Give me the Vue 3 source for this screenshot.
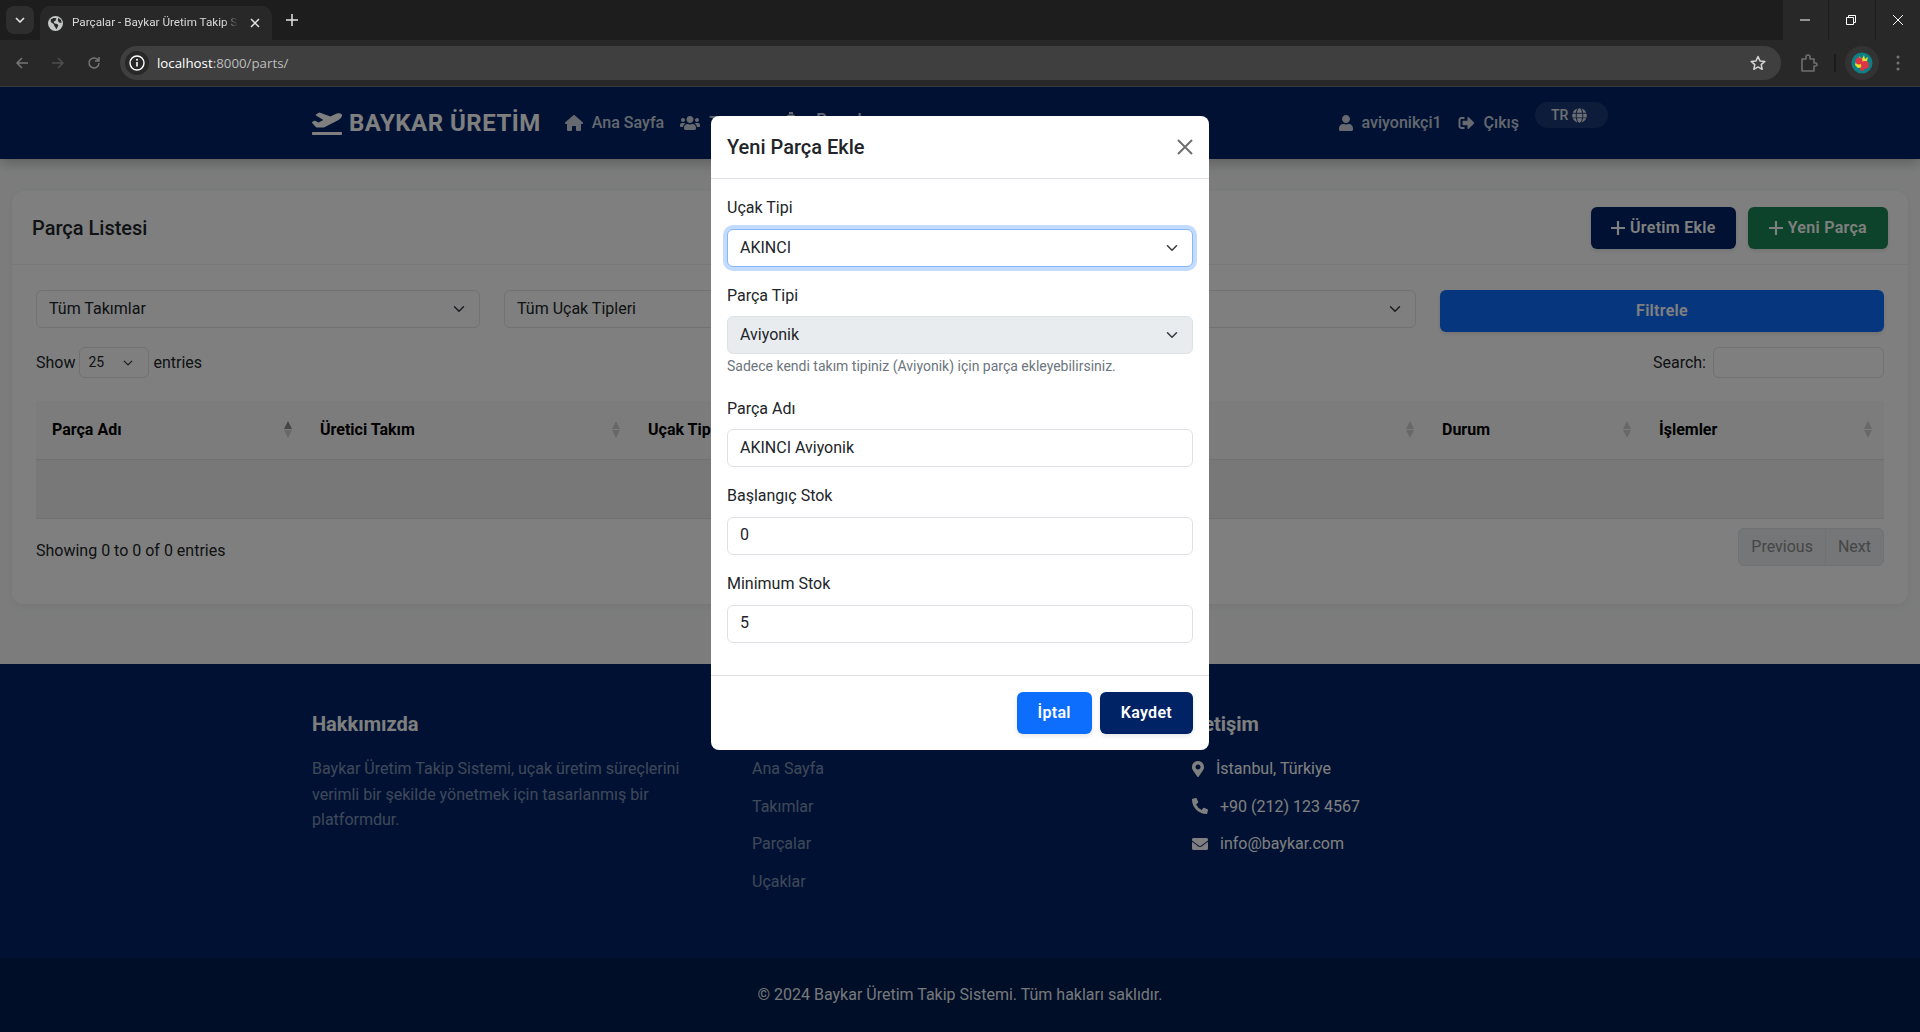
<script setup>
const icons = {
  plane: { box: '0 0 640 512', d: 'M624 448H16c-8.84 0-16 7.16-16 16v32c0 8.84 7.16 16 16 16h608c8.84 0 16-7.16 16-16v-32c0-8.84-7.16-16-16-16zM80.55 341.27c6.28 6.84 15.1 10.72 24.33 10.71l130.54-.18a65.62 65.62 0 0 0 29.64-7.12l290.96-147.65c26.74-13.57 50.71-32.94 67.02-58.31 18.31-28.48 20.3-49.09 13.07-63.65-7.21-14.57-24.74-25.27-58.25-27.45-29.85-1.94-59.54 5.92-86.28 19.48l-98.51 49.99-218.7-82.06a17.799 17.799 0 0 0-18-1.11L90.62 67.29c-10.67 5.41-13.25 19.65-5.17 28.53l156.22 98.1-103.21 52.38-72.35-36.47a17.804 17.804 0 0 0-16.07.02L9.91 230.22c-10.44 5.3-13.19 19.12-5.57 28.08l76.21 82.97z' },
  home: { box: '0 0 576 512', d: 'M575.8 255.5c0 18-15 32.1-32 32.1h-32l.7 160.2c0 2.7-.2 5.4-.5 8.1V472c0 22.1-17.9 40-40 40H456c-1.1 0-2.2 0-3.3-.1c-1.4 .1-2.8 .1-4.2 .1H416 392c-22.1 0-40-17.9-40-40V448 384c0-17.7-14.3-32-32-32H256c-17.7 0-32 14.3-32 32v64 24c0 22.1-17.9 40-40 40H160 128.1c-1.5 0-3-.1-4.5-.2c-1.2 .1-2.4 .2-3.6 .2H104c-22.1 0-40-17.9-40-40V360c0-.9 0-1.9 .1-2.8V287.6H32c-18 0-32-14-32-32.1c0-9 3-17 10-24L266.4 8c7-7 15-8 22-8s15 2 21 7L564.8 231.5c8 7 12 15 11 24z' },
  users: { box: '0 0 640 512', d: 'M96 224c35.3 0 64-28.7 64-64s-28.7-64-64-64-64 28.7-64 64 28.7 64 64 64zm448 0c35.3 0 64-28.7 64-64s-28.7-64-64-64-64 28.7-64 64 28.7 64 64 64zm32 32h-64c-17.6 0-33.5 7.1-45.1 18.6 40.3 22.1 68.9 62 75.1 109.4h66c17.7 0 32-14.3 32-32v-32c0-35.3-28.7-64-64-64zm-256 0c61.9 0 112-50.1 112-112S381.9 32 320 32 208 82.1 208 144s50.1 112 112 112zm76.8 32h-8.3c-20.8 10-43.9 16-68.5 16s-47.6-6-68.5-16h-8.3C179.6 288 128 339.6 128 403.2V432c0 26.5 21.5 48 48 48h288c26.5 0 48-21.5 48-48v-28.8c0-63.6-51.6-115.2-115.2-115.2zm-223.7-13.4C161.5 263.1 145.6 256 128 256H64c-35.3 0-64 28.7-64 64v32c0 17.7 14.3 32 32 32h65.9c6.3-47.4 34.9-87.3 75.2-109.4z' },
  user: { box: '0 0 448 512', d: 'M224 256c70.7 0 128-57.3 128-128S294.7 0 224 0 96 57.3 96 128s57.3 128 128 128zm89.6 32h-16.7c-22.2 10.2-46.9 16-72.9 16s-50.6-5.8-72.9-16h-16.7C60.2 288 0 348.2 0 422.4V464c0 26.5 21.5 48 48 48h352c26.5 0 48-21.5 48-48v-41.6c0-74.2-60.2-134.4-134.4-134.4z' },
  logout: { box: '0 0 512 512', d: 'M497 273L329 441c-15 15-41 4.5-41-17v-96H152c-13.3 0-24-10.7-24-24v-96c0-13.3 10.7-24 24-24h136V88c0-21.4 25.9-32 41-17l168 168c9.3 9.4 9.3 24.6 0 34zM192 436v-40c0-6.6-5.4-12-12-12H96c-17.7 0-32-14.3-32-32V160c0-17.7 14.3-32 32-32h84c6.6 0 12-5.4 12-12V76c0-6.6-5.4-12-12-12H96c-53 0-96 43-96 96v192c0 53 43 96 96 96h84c6.6 0 12-5.4 12-12z' },
  globe: { box: '0 0 496 512', d: 'M336.5 160C322 70.7 287.8 8 248 8s-74 62.7-88.5 152h177zM152 256c0 22.2 1.2 43.5 3.3 64h185.3c2.1-20.5 3.3-41.8 3.3-64s-1.2-43.5-3.3-64H155.3c-2.1 20.5-3.3 41.8-3.3 64zm324.7-96c-28.6-67.9-86.5-120.4-158-141.6 24.4 33.8 41.2 84.7 50 141.6h108zM177.2 18.4C105.8 39.6 47.8 92.1 19.3 160h108c8.7-56.9 25.5-107.8 49.9-141.6zM487.4 192H372.7c2.1 21 3.3 42.5 3.3 64s-1.2 43-3.3 64h114.6c5.5-20.5 8.6-41.8 8.6-64s-3.1-43.5-8.5-64zM120 256c0-21.5 1.2-43 3.3-64H8.6C3.2 212.5 0 233.8 0 256s3.2 43.5 8.6 64h114.6c-2-21-3.2-42.5-3.2-64zm39.5 96c14.5 89.3 48.7 152 88.5 152s74-62.7 88.5-152h-177zm159.3 141.6c71.4-21.2 129.4-73.7 158-141.6h-108c-8.8 56.9-25.6 107.8-50 141.6zM19.3 352c28.6 67.9 86.5 120.4 158 141.6-24.4-33.8-41.2-84.7-50-141.6h-108z' },
  pin: { box: '0 0 384 512', d: 'M172.268 501.67C26.97 291.031 0 273.413 0 192 0 85.961 85.961 0 192 0s192 85.961 192 192c0 81.413-26.97 99.031-172.268 309.67-9.535 13.774-29.93 13.773-39.464 0zM192 272c44.183 0 80-35.817 80-80s-35.817-80-80-80-80 35.817-80 80 35.817 80 80 80z' },
  phone: { box: '0 0 512 512', d: 'M497.39 361.8l-112-48a24 24 0 0 0-28 6.9l-49.6 60.6A370.66 370.66 0 0 1 130.6 204.11l60.6-49.6a23.94 23.94 0 0 0 6.9-28l-48-112A24.16 24.16 0 0 0 122.6.61l-104 24A24 24 0 0 0 0 48c0 256.5 207.9 464 464 464a24 24 0 0 0 23.4-18.6l24-104a24.29 24.29 0 0 0-14.01-27.6z' },
  mail: { box: '0 0 512 512', d: 'M502.3 190.8c3.9-3.1 9.7-.2 9.7 4.7V400c0 26.5-21.5 48-48 48H48c-26.5 0-48-21.5-48-48V195.6c0-5 5.7-7.8 9.7-4.7 22.4 17.4 52.1 39.5 154.1 113.6 21.1 15.4 56.7 47.8 92.2 47.6 35.7.3 72-32.8 92.3-47.6 102-74.1 131.6-96.3 154-113.7zM256 320c23.2.4 56.6-29.2 73.4-41.4 132.7-96.3 142.8-104.7 173.4-128.7 5.8-4.5 9.2-11.5 9.2-18.9v-19c0-26.5-21.5-48-48-48H48C21.5 64 0 85.5 0 112v19c0 7.4 3.4 14.3 9.2 18.9 30.6 23.9 40.7 32.4 173.4 128.7 16.8 12.2 50.2 41.8 73.4 41.4z' },
  cog: { box: '0 0 30 24', d: 'M3 0h6v4H3zM6 3a9 9 0 1 0 0 18 9 9 0 0 0 0-18z' }
}

const navLinks = [
  { icon: 'home', label: 'Ana Sayfa', cls: 'i-home' },
  { icon: 'users', label: 'Takımlar' },
  { icon: 'cog', label: 'Parçalar', cls: 'raised' },
  { icon: 'plane', label: 'Uçaklar' }
]

const filters = ['Tüm Takımlar', 'Tüm Uçak Tipleri', 'Tüm Parça Tipleri']

const columns = [
  { label: 'Parça Adı', width: 268, active: true },
  { label: 'Üretici Takım', width: 328 },
  { label: 'Uçak Tipi', width: 368 },
  { label: 'Stok', width: 426 },
  { label: 'Durum', width: 217 },
  { label: 'İşlemler', width: 241 }
]

const quickLinks = ['Ana Sayfa', 'Takımlar', 'Parçalar', 'Uçaklar']

const contacts = [
  { icon: 'pin', text: 'İstanbul, Türkiye', cls: 'c-pin' },
  { icon: 'phone', text: '+90 (212) 123 4567', cls: 'c-wide' },
  { icon: 'mail', text: 'info@baykar.com', cls: 'c-wide' }
]

const fields = [
  { label: 'Parça Adı', value: 'AKINCI Aviyonik' },
  { label: 'Başlangıç Stok', value: '0' },
  { label: 'Minimum Stok', value: '5' }
]
</script>

<template>
  <div class="screen">
    <!-- browser chrome -->
    <div class="tabstrip">
      <div class="tab-menu">
        <svg width="10" height="6" viewBox="0 0 10 6"><path d="M1 1l4 4 4-4" fill="none" stroke="#e3e3e3" stroke-width="1.6" /></svg>
      </div>
      <div class="tab">
        <svg class="tab-globe" width="15" height="15" viewBox="0 0 16 16">
          <circle cx="8" cy="8" r="8" fill="#c4c7c5" />
          <path d="M3 3.500l3-1.500 3 .5-1 2.500-2 1 1 2 3 .5 1 2-2 3.500-2-3-1-2.500-3-2zM11 1.800l3 2.700.5 3-2.500-.5-1.500-2z" fill="#282828" />
        </svg>
        <span class="tab-title">Parçalar - Baykar Üretim Takip S</span>
        <svg width="10" height="10" viewBox="0 0 10 10"><path d="M1 1l8 8M9 1l-8 8" stroke="#e3e3e3" stroke-width="1.5" /></svg>
      </div>
      <svg class="new-tab" width="12" height="12" viewBox="0 0 12 12"><path d="M6 0v12M0 6h12" stroke="#e3e3e3" stroke-width="1.5" /></svg>
      <div class="win-controls">
        <div class="win-btn">
          <svg width="10" height="10" viewBox="0 0 10 10"><path d="M0 5h10" stroke="#fff" /></svg>
        </div>
        <div class="win-btn">
          <svg width="10" height="10" viewBox="0 0 10 10"><path d="M.5 2.500h7v7h-7zM2.500 2.500v-2h7v7h-2" fill="none" stroke="#fff" /></svg>
        </div>
        <div class="win-btn">
          <svg width="10" height="10" viewBox="0 0 10 10"><path d="M0 0l10 10M10 0L0 10" stroke="#fff" /></svg>
        </div>
      </div>
    </div>
    <div class="toolbar">
      <svg class="tool-back" width="14" height="14" viewBox="0 0 14 14"><path d="M13 7H2M7 2L2 7l5 5" fill="none" stroke="#757575" stroke-width="1.500" /></svg>
      <svg class="tool-fwd" width="14" height="14" viewBox="0 0 14 14"><path d="M1 7h11M7 2l5 5-5 5" fill="none" stroke="#4d4d4d" stroke-width="1.500" /></svg>
      <svg class="tool-reload" width="14" height="14" viewBox="0 0 14 14"><path d="M12 7a5 5 0 1 1-1.500-3.600L12 5M12 1v4H8" fill="none" stroke="#757575" stroke-width="1.500" /></svg>
      <div class="omnibox">
        <div class="site-info">
          <svg width="16" height="16" viewBox="0 0 16 16"><circle cx="8" cy="8" r="7" fill="none" stroke="#fff" stroke-width="1.400" /><path d="M8 7v4.500" stroke="#fff" stroke-width="1.600" /><circle cx="8" cy="4.800" r="1" fill="#fff" /></svg>
        </div>
        <span class="url"><b>localhost</b>:8000/parts/</span>
        <svg class="star" width="16" height="16" viewBox="0 0 16 16"><path d="M8 1.500l2 4.400 4.800.5-3.600 3.200 1 4.700L8 11.900l-4.200 2.400 1-4.700L1.200 6.400 6 5.900z" fill="none" stroke="#d5d5d5" stroke-width="1.500" stroke-linejoin="round" /></svg>
      </div>
      <svg class="puzzle" width="17" height="18" viewBox="0 0 17 18"><path d="M1 5h4V3a2 2 0 0 1 4 0v2h4v4h1.500a1.500 1.500 0 0 1 0 3H13v5H1z" fill="none" stroke="#6f6f6f" stroke-width="1.600" stroke-linejoin="round" /></svg>
      <span class="tool-sep"></span>
      <div class="avatar-wrap">
        <svg width="22" height="22" viewBox="0 0 22 22">
          <circle cx="11" cy="11" r="10.500" fill="#0f7f86" />
          <path d="M6 6l3 2-1-4 3 3 2-4 1 4 3-2-1 4-3 6-6 1-3-3z" fill="#e7e02c" />
          <circle cx="8" cy="9" r="3.500" fill="#dc3545" />
          <circle cx="14" cy="13" r="4" fill="#dc3545" />
          <circle cx="11" cy="17" r="2" fill="#dc3545" />
        </svg>
      </div>
      <svg class="kebab" width="4" height="16" viewBox="0 0 4 16"><circle cx="2" cy="2" r="1.500" fill="#757575" /><circle cx="2" cy="8" r="1.500" fill="#757575" /><circle cx="2" cy="14" r="1.500" fill="#757575" /></svg>
    </div>

    <div class="page">
      <header class="topbar">
        <div class="container topbar-in">
          <a class="brand">
            <svg class="brand-icon" :viewBox="icons.plane.box"><path :d="icons.plane.d" /></svg>
            BAYKAR ÜRETİM
          </a>
          <nav class="nav">
            <a v-for="link in navLinks" :key="link.label" class="nav-link" :class="link.cls">
              <svg class="nav-icon" :viewBox="icons[link.icon].box"><path :d="icons[link.icon].d" /></svg>
              {{ link.label }}
            </a>
          </nav>
          <div class="nav-right">
            <a class="nav-link thin">
              <svg class="user-icon" :viewBox="icons.user.box"><path :d="icons.user.d" /></svg>
              aviyonikçi1
            </a>
            <a class="nav-link thin">
              <svg class="user-icon wide" :viewBox="icons.logout.box"><path :d="icons.logout.d" /></svg>
              Çıkış
            </a>
            <div class="lang">
              TR
              <svg :viewBox="icons.globe.box"><path :d="icons.globe.d" /></svg>
            </div>
          </div>
        </div>
      </header>

      <main class="main">
        <section class="card">
          <div class="card-head">
            <h5>Parça Listesi</h5>
            <div class="head-btns">
              <button class="btn navy add-prod"><svg class="plus" width="14" height="14" viewBox="0 0 14 14"><path d="M7 0v14M0 7h14" stroke="currentColor" stroke-width="2.200" /></svg>Üretim Ekle</button>
              <button class="btn green"><svg class="plus" width="14" height="14" viewBox="0 0 14 14"><path d="M7 0v14M0 7h14" stroke="currentColor" stroke-width="2.200" /></svg>Yeni Parça</button>
            </div>
          </div>
          <div class="card-body">
            <div class="filters">
              <div v-for="f in filters" :key="f" class="select">
                <span>{{ f }}</span>
                <svg width="16" height="12" viewBox="0 0 16 16"><path d="M2 5l6 6 6-6" fill="none" stroke="#343a40" stroke-width="2" stroke-linecap="round" stroke-linejoin="round" /></svg>
              </div>
              <button class="btn blue">Filtrele</button>
            </div>

            <div class="dt-top">
              <div class="dt-length">
                Show
                <div class="select mini">
                  <span>25</span>
                  <svg width="14" height="10" viewBox="0 0 16 16"><path d="M2 5l6 6 6-6" fill="none" stroke="#343a40" stroke-width="2" stroke-linecap="round" stroke-linejoin="round" /></svg>
                </div>
                entries
              </div>
              <div class="dt-search">
                Search:
                <input class="search-input" type="text" />
              </div>
            </div>

            <table class="table">
              <colgroup>
                <col v-for="c in columns" :key="c.label" :style="{ width: c.width + 'px' }" />
              </colgroup>
              <thead>
                <tr>
                  <th v-for="c in columns" :key="c.label">
                    <div class="th-in">
                      {{ c.label }}
                      <span class="sort" :class="{ active: c.active }"><i class="up"></i><i class="down"></i></span>
                    </div>
                  </th>
                </tr>
              </thead>
              <tbody>
                <tr>
                  <td colspan="6">No data available in table</td>
                </tr>
              </tbody>
            </table>

            <div class="dt-bottom">
              <div class="dt-info">Showing 0 to 0 of 0 entries</div>
              <div class="pager">
                <span>Previous</span>
                <span>Next</span>
              </div>
            </div>
          </div>
        </section>
      </main>

      <footer class="footer">
        <div class="container footer-cols">
          <div>
            <h5>Hakkımızda</h5>
            <p class="muted">Baykar Üretim Takip Sistemi, uçak üretim süreçlerini verimli bir şekilde yönetmek için tasarlanmış bir platformdur.</p>
          </div>
          <div>
            <h5>Hızlı Erişim</h5>
            <a v-for="l in quickLinks" :key="l" class="muted foot-link">{{ l }}</a>
          </div>
          <div>
            <h5>İletişim</h5>
            <div v-for="c in contacts" :key="c.text" class="contact" :class="c.cls">
              <svg :viewBox="icons[c.icon].box"><path :d="icons[c.icon].d" /></svg>
              {{ c.text }}
            </div>
          </div>
        </div>
        <div class="copyright">© 2024 Baykar Üretim Takip Sistemi. Tüm hakları saklıdır.</div>
      </footer>

      <!-- modal open, over the page -->
      <div class="backdrop">
        <div class="modal">
          <div class="modal-head">
            <h5>Yeni Parça Ekle</h5>
            <svg width="16" height="16" viewBox="0 0 16 16"><path d="M1 1l14 14M15 1L1 15" stroke="#6d6f71" stroke-width="2" /></svg>
          </div>
          <div class="modal-body">
            <div class="group">
              <label>Uçak Tipi</label>
              <div class="select focus">
                <span>AKINCI</span>
                <svg width="16" height="12" viewBox="0 0 16 16"><path d="M2 5l6 6 6-6" fill="none" stroke="#343a40" stroke-width="2" stroke-linecap="round" stroke-linejoin="round" /></svg>
              </div>
            </div>
            <div class="group">
              <label>Parça Tipi</label>
              <div class="select disabled">
                <span>Aviyonik</span>
                <svg width="16" height="12" viewBox="0 0 16 16"><path d="M2 5l6 6 6-6" fill="none" stroke="#343a40" stroke-width="2" stroke-linecap="round" stroke-linejoin="round" /></svg>
              </div>
              <small>Sadece kendi takım tipiniz (Aviyonik) için parça ekleyebilirsiniz.</small>
            </div>
            <div v-for="f in fields" :key="f.label" class="group">
              <label>{{ f.label }}</label>
              <input class="input" type="text" :value="f.value" />
            </div>
          </div>
          <div class="modal-foot">
            <button class="btn blue modal-btn">İptal</button>
            <button class="btn navy modal-btn">Kaydet</button>
          </div>
        </div>
      </div>
    </div>
  </div>
</template>

<style>
html,
body {
  margin: 0;
  background: #f8f9fa;
}
</style>

<style scoped>
.screen {
  width: 1920px;
  height: 1032px;
  overflow: hidden;
  font-family: Roboto, "Liberation Sans", sans-serif;
  font-size: 16px;
  line-height: 1.6;
  color: #212529;
}

/* chrome */
.tabstrip {
  height: 40px;
  display: flex;
  background: #1d1d1d;
}
.tab-menu {
  width: 28px;
  height: 28px;
  margin: 6px 0 0 6px;
  border-radius: 8px;
  background: #2e2e2e;
  display: flex;
  align-items: center;
  justify-content: center;
}
.tab {
  width: 232px;
  height: 34px;
  margin: 6px 0 0 6px;
  padding: 0 12px 0 8px;
  box-sizing: border-box;
  border-radius: 10px 10px 0 0;
  background: #282828;
  display: flex;
  align-items: center;
}
.tab-globe {
  flex: none;
}
.tab-title {
  width: 166px;
  margin: -2px 12px 0 9px;
  font-size: 11.7px;
  line-height: 16px;
  white-space: nowrap;
  color: #d9d9d9;
  -webkit-mask-image: linear-gradient(to right, #000 152px, transparent 166px);
  mask-image: linear-gradient(to right, #000 152px, transparent 166px);
}
.new-tab {
  margin: 14px 0 0 14px;
}
.win-controls {
  margin-left: auto;
  width: 137px;
  display: flex;
  background: #282828;
}
.win-btn {
  flex: 1;
  display: flex;
  align-items: center;
  justify-content: center;
  border-left: 1px solid #1d1d1d;
}
.win-btn:first-child {
  border-left: 0;
  padding-right: 1px;
}
.win-btn:nth-child(2) {
  padding-right: 2px;
}
.toolbar {
  height: 46px;
  border-bottom: 1px solid #3b3b3b;
  background: #282828;
  display: flex;
  align-items: center;
}
.tool-back {
  margin-left: 15px;
}
.tool-fwd {
  margin-left: 22px;
}
.tool-reload {
  margin-left: 22px;
}
.omnibox {
  width: 1661px;
  height: 34px;
  margin-left: 19px;
  border-radius: 17px;
  background: #3f3f3f;
  display: flex;
  align-items: center;
}
.site-info {
  width: 24px;
  height: 24px;
  margin-left: 5px;
  border-radius: 50%;
  background: #282828;
  display: flex;
  align-items: center;
  justify-content: center;
}
.url {
  margin: 2px 0 0 8px;
  font-family: "Open Sans", "Noto Sans", sans-serif;
  font-size: 13.3px;
  color: #bdbdbd;
}
.url b {
  font-weight: 400;
  color: #fff;
}
.star {
  margin-left: auto;
  margin-right: 15px;
}
.puzzle {
  margin-left: 20px;
}
.tool-sep {
  width: 2px;
  height: 18px;
  margin-left: 16px;
  background: #1b1b1b;
}
.avatar-wrap {
  width: 34px;
  height: 34px;
  margin-left: 9px;
  border-radius: 50%;
  background: #333;
  display: flex;
  align-items: center;
  justify-content: center;
}
.kebab {
  margin-left: 17px;
}

/* page */
.page {
  position: relative;
  height: 945px;
  overflow: hidden;
  background: #f8f9fa;
}
.container {
  width: 1296px;
  margin: 0 auto;
}
.topbar {
  position: relative;
  height: 72px;
  background: #002366;
  box-shadow: 0 4px 12px rgba(0, 0, 0, 0.25);
}
.topbar-in {
  height: 100%;
  display: flex;
  align-items: center;
}
.brand {
  display: flex;
  align-items: center;
  margin: 0 16px 0 0;
  font-size: 24px;
  font-weight: 700;
  letter-spacing: 0.5px;
  color: #fff;
}
.brand-icon {
  width: 30px;
  height: 24px;
  margin-right: 7px;
  fill: #fff;
}
.nav {
  display: flex;
  margin-top: -1px;
}
.nav-link {
  display: flex;
  align-items: center;
  padding: 0 8px;
  font-weight: 500;
  color: rgba(255, 255, 255, 0.8);
  white-space: nowrap;
}
.nav-link.raised {
  transform: translateY(-3px);
}
.nav-icon {
  width: 20px;
  height: 16px;
  margin-right: 9px;
  fill: currentColor;
  overflow: visible;
}
.i-home .nav-icon {
  width: 18px;
}
.nav-right {
  margin-left: auto;
  display: flex;
  align-items: center;
  margin-top: -1px;
}
.nav-link.thin {
  padding: 0;
  margin-right: 16px;
}
.user-icon {
  width: 14px;
  height: 16px;
  margin-right: 9px;
  fill: currentColor;
}
.user-icon.wide {
  width: 17px;
  margin-right: 9px;
}
.lang {
  width: 73px;
  height: 26px;
  box-sizing: border-box;
  margin: -15px 0 0 0;
  padding-left: 16px;
  border-radius: 13px;
  background: rgba(255, 255, 255, 0.1);
  display: flex;
  align-items: center;
  gap: 4px;
  font-size: 14px;
  font-weight: 500;
  color: rgba(255, 255, 255, 0.85);
}
.lang svg {
  width: 15px;
  height: 15px;
  fill: currentColor;
}

.main {
  padding: 32px 12px 60px;
}
.card {
  height: 413px;
  box-sizing: border-box;
  border-radius: 12px;
  background: #fff;
  box-shadow: 0 2px 10px rgba(0, 0, 0, 0.06);
}
.card-head {
  height: 74px;
  box-sizing: border-box;
  padding: 16px 20px;
  border-bottom: 1px solid #f0f0f0;
  display: flex;
  justify-content: space-between;
}
h5 {
  margin: 0;
  font-size: 20px;
  line-height: 1.2;
  font-weight: 500;
}
.card-head h5 {
  align-self: center;
}
.head-btns {
  display: flex;
  gap: 12px;
}
.btn {
  height: 42px;
  padding: 0 21px 2px;
  border: 0;
  border-radius: 6px;
  font-family: inherit;
  font-size: 16px;
  font-weight: 600;
  letter-spacing: 0.3px;
  color: #fff;
  box-shadow: 0 2px 4px rgba(0, 0, 0, 0.1);
}
.btn.add-prod {
  padding: 0 20px 2px;
}
.plus {
  margin-right: 5px;
  vertical-align: -2px;
}
.navy {
  background: #002366;
}
.green {
  background: #198754;
}
.blue {
  background: #0d6efd;
}
.card-body {
  padding: 25px 24px 0;
}
.filters {
  display: grid;
  grid-template-columns: repeat(4, 1fr);
  gap: 24px;
  align-items: start;
}
.select {
  height: 38.4px;
  box-sizing: border-box;
  padding: 0 12px;
  border: 1px solid #dee2e6;
  border-radius: 6px;
  background: #fff;
  display: flex;
  align-items: center;
  justify-content: space-between;
}
.filters .btn {
  width: 100%;
}
.dt-top {
  margin-top: 15px;
  display: flex;
  justify-content: space-between;
  align-items: center;
  height: 31px;
}
.dt-length,
.dt-search {
  display: flex;
  align-items: center;
}
.select.mini {
  width: 70px;
  height: 31px;
  margin: 0 4px 0 4px;
  padding: 0 13px 0 8px;
  font-size: 14px;
}
.search-input {
  width: 171px;
  height: 31px;
  box-sizing: border-box;
  margin-left: 7px;
  border: 1px solid #dee2e6;
  border-radius: 6px;
  background: transparent;
}
.table {
  width: 1848px;
  margin-top: 23px;
  border-collapse: collapse;
  table-layout: fixed;
}
.table th {
  padding: 16px 12px 16px 16px;
  border-bottom: 1px solid #dee2e6;
  background: #f8f9fa;
  text-align: left;
  font-weight: 700;
  color: #000;
}
.th-in {
  display: flex;
  justify-content: space-between;
  align-items: center;
  white-space: nowrap;
}
.sort {
  display: flex;
  flex-direction: column;
  gap: 1px;
}
.sort i {
  display: block;
  width: 0;
  height: 0;
  border-left: 4px solid transparent;
  border-right: 4px solid transparent;
}
.sort .up {
  border-bottom: 8px solid #d0d0d0;
}
.sort .down {
  border-top: 8px solid #d0d0d0;
}
.sort.active .up {
  border-bottom-color: #8a8a8a;
}
.table td {
  height: 59px;
  box-sizing: border-box;
  padding: 0;
  border-bottom: 1px solid #dee2e6;
  background: #f0f0f0;
  text-align: center;
}
.dt-bottom {
  margin-top: 9px;
  display: flex;
  justify-content: space-between;
  align-items: flex-start;
}
.dt-info {
  padding-top: 10px;
}
.pager {
  display: flex;
  height: 38px;
  box-sizing: border-box;
  border: 1px solid #dee2e6;
  border-radius: 6px;
  background: #e9ecef;
  color: #8c8c8c;
  align-items: center;
}
.pager span {
  padding: 0 12px;
  line-height: 36px;
}
.pager span + span {
  border-left: 1px solid #dee2e6;
}

.footer {
  height: 368px;
  box-sizing: border-box;
  padding-top: 48px;
  background: #002366;
  display: flex;
  flex-direction: column;
  color: #fff;
}
.footer-cols {
  flex: 1;
  display: grid;
  grid-template-columns: repeat(3, 440px);
  column-gap: 0;
}
.footer h5 {
  margin-bottom: 20px;
  font-weight: 700;
}
.muted {
  color: rgba(255, 255, 255, 0.5);
}
.footer p {
  margin: 0;
  width: 400px;
}
.foot-link {
  display: block;
  margin-bottom: 12px;
}
.contact {
  display: flex;
  align-items: center;
  margin-bottom: 12px;
}
.contact svg {
  height: 16px;
  margin-right: 12px;
  fill: currentColor;
}
.c-pin svg {
  width: 12px;
}
.c-wide svg {
  width: 16px;
  margin-right: 12px;
}
.copyright {
  padding: 24px 0;
  background: rgba(0, 0, 0, 0.2);
  text-align: center;
  color: rgba(255, 255, 255, 0.95);
}

/* modal */
.backdrop {
  position: absolute;
  inset: 0;
  background: rgba(0, 0, 0, 0.5);
  display: flex;
  justify-content: center;
  align-items: flex-start;
  padding-top: 29px;
}
.modal {
  width: 498px;
  height: 634px;
  box-sizing: border-box;
  border-radius: 8px;
  background: #fff;
  display: flex;
  flex-direction: column;
}
.modal-head {
  height: 63px;
  flex: none;
  box-sizing: border-box;
  padding: 0 16px;
  border-bottom: 1px solid #dee2e6;
  display: flex;
  align-items: center;
  justify-content: space-between;
}
.modal-body {
  flex: 1;
  min-height: 0;
  padding: 16px 16px 0;
}
.group {
  margin-bottom: 16px;
}
.group label {
  display: block;
  margin-bottom: 8px;
}
.select.focus,
.select.disabled {
  height: 38px;
}
.select.focus {
  border-color: #86b7fe;
  box-shadow: 0 0 0 4px rgba(13, 110, 253, 0.25);
}
.select.disabled {
  background: #e9ecef;
}
.group small {
  display: block;
  margin-top: 2px;
  padding-bottom: 2.6px;
  font-size: 14px;
  line-height: 21px;
  color: #6c757d;
}
.input {
  display: block;
  width: 100%;
  height: 38px;
  box-sizing: border-box;
  padding: 0 12px 2px;
  border: 1px solid #dee2e6;
  border-radius: 6px;
  font-family: inherit;
  font-size: 16px;
  color: #212529;
}
.modal-foot {
  flex: none;
  height: 75px;
  box-sizing: border-box;
  padding: 16px;
  border-top: 1px solid #dee2e6;
  display: flex;
  justify-content: flex-end;
  gap: 8px;
}
</style>
